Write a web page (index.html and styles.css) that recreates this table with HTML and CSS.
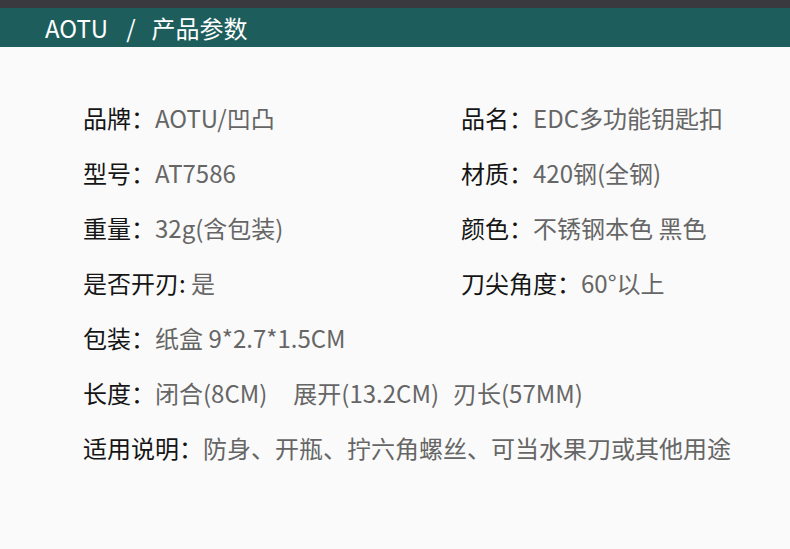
FILE: index.html
```html
<!DOCTYPE html>
<html lang="zh-CN">
<head>
  <meta charset="UTF-8">
  <meta name="viewport" content="width=device-width, initial-scale=1.0">
  <title>AOTU 产品参数</title>
  <link rel="stylesheet" href="styles.css">
</head>
<body>

  <!-- Header -->
  <div class="top-strip"></div>
  <div class="header">
    <span class="brand">AOTU</span>
    <span class="sep">/</span>
    <span class="title">产品参数</span>
  </div>

  <!-- Parameters -->
  <div class="params">
    <div class="row two">
      <div class="item"><span class="label">品牌：</span><span class="value">AOTU/凹凸</span></div>
      <div class="item"><span class="label">品名：</span><span class="value">EDC多功能钥匙扣</span></div>
    </div>
    <div class="row two">
      <div class="item"><span class="label">型号：</span><span class="value">AT7586</span></div>
      <div class="item"><span class="label">材质：</span><span class="value">420钢(全钢)</span></div>
    </div>
    <div class="row two">
      <div class="item"><span class="label">重量：</span><span class="value">32g(含包装)</span></div>
      <div class="item"><span class="label">颜色：</span><span class="value">不锈钢本色 黑色</span></div>
    </div>
    <div class="row two">
      <div class="item"><span class="label">是否开刃: </span><span class="value">是</span></div>
      <div class="item"><span class="label">刀尖角度：</span><span class="value">60°以上</span></div>
    </div>
    <div class="row">
      <div class="item"><span class="label">包装：</span><span class="value">纸盒 9*2.7*1.5CM</span></div>
    </div>
    <div class="row">
      <div class="item">
        <span class="label">长度：</span><span class="value">闭合(8CM)</span><span class="value gap-wide">展开(13.2CM)</span><span class="value gap">刃长(57MM)</span>
      </div>
    </div>
    <div class="row">
      <div class="item"><span class="label">适用说明：</span><span class="value">防身、开瓶、拧六角螺丝、可当水果刀或其他用途</span></div>
    </div>
  </div>

</body>
</html>
```

FILE: styles.css
```css
body {
  margin: 0;
  background-color: #fafafa;
  font-family: "Noto Sans CJK SC", "Noto Sans", sans-serif;
}

/* Header */
.top-strip {
  height: 8px;
  background-color: #3a3940;
}

.header {
  height: 39px;
  background-color: #1d5e5c;
  color: #fff;
  font-size: 24px;
  line-height: 39px;
  padding-left: 45px;
  display: flex;
  align-items: center;
}

.header .sep {
  margin: 0 16px 0 18px;
}

/* Parameters */
.params {
  padding: 43px 0 0 83px;
}

.row {
  display: flex;
  height: 55px;
  align-items: center;
  font-size: 24px;
  white-space: nowrap;
}

.row.two .item:first-child {
  width: 378px;
}

.label {
  color: #151515;
}

.value {
  color: #666;
}

.gap-wide {
  margin-left: 26px;
}

.gap {
  margin-left: 14px;
}
```
